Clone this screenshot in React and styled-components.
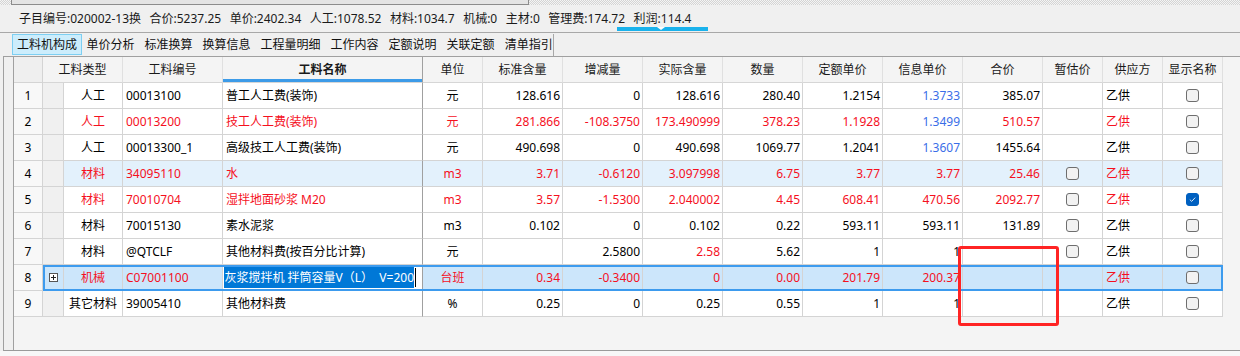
import React from "react";
import styled, { createGlobalStyle, css } from "styled-components";

const RED = "#f5101e";
const BLUE = "#3a6ee8";
const BODY_COLS = "21px 59px 100px 200px 60px repeat(7, 80px) repeat(3, 60px)";

const GlobalStyle = createGlobalStyle`
  html, body { margin: 0; padding: 0; background: #f0f0f0; }
  body {
    font-family: "Noto Sans", "Noto Sans CJK SC", sans-serif;
    font-size: 12px;
    color: #000;
  }
`;

const Page = styled.div`
  position: relative;
  width: 1240px;
  height: 356px;
  overflow: hidden;
  background: #f0f0f0;
  display: flex;
  flex-direction: column;
`;

/* strip of the window above */
const TopStrip = styled.div`
  height: 5px;
  display: flex;
  background: repeating-conic-gradient(#d4d4d4 0 25%, #f4f4f4 0 50%) 0 0 / 2px 2px;
`;
const StripTab = styled.div`
  margin-left: 11px;
  width: 516px;
  background: #e4e4e4;
  border: 1px solid #8c8c8c;
  border-top: none;
`;

const InfoBar = styled.div`
  height: 27px;
  display: flex;
  align-items: center;
  gap: 8.5px;
  padding-left: 19px;
  background: #f0f0f0;
  border-bottom: 1px solid #a8a8a8;
  line-height: 15px;
  color: #1a1a1a;
`;

const InfoItem = styled.span`
  position: relative;
  align-self: stretch;
  display: flex;
  align-items: center;
  white-space: nowrap;
  ${(p) =>
    p.$active &&
    css`
      &::after {
        content: "";
        position: absolute;
        left: -17px;
        width: 91px;
        bottom: 1px;
        height: 4px;
        background: #1ab2ec;
      }
      &::before {
        content: "";
        position: absolute;
        left: 23px;
        bottom: 2px;
        border-left: 4px solid transparent;
        border-right: 4px solid transparent;
        border-top: 3px solid #ffffff;
        z-index: 1;
      }
    `}
`;

const TabBar = styled.div`
  height: 22px;
  padding: 1px 0 0 12px;
  display: flex;
`;

const TabGroup = styled.div`
  display: flex;
  border-right: 1px solid #a8a8a8;
`;

const Tab = styled.div`
  height: 21px;
  box-sizing: border-box;
  padding: 0 5px;
  line-height: 21px;
  color: #111;
  white-space: nowrap;
  &:last-child {
    padding-right: 0;
  }
  ${(p) =>
    p.$active &&
    css`
      padding: 0 3.5px 0 4px;
      line-height: 19px;
      background: #ccedfc;
      border: 1px solid #7dcff2;
    `}
`;

const GridPanel = styled.div`
  height: 293px;
  margin-left: 3px;
  border-left: 1px solid #a0a0a0;
  border-top: 1px solid #a0a0a0;
  border-bottom: 1px solid #9a9a9a;
  padding-left: 9px;
  background: #f0f0f0;
`;

const GridFrame = styled.div`
  height: 100%;
  border-left: 1px solid #a0a0a0;
  background: #f4f4f4;
`;

const Row = styled.div`
  display: flex;
  height: 26px;
`;

const NumCell = styled.div`
  width: 29px;
  box-sizing: border-box;
  border-right: 1px solid #d4d4d4;
  border-bottom: 1px solid #d4d4d4;
  background: ${(p) => (p.$head ? "#efefef" : "#f8f8f8")};
  display: flex;
  align-items: center;
  justify-content: center;
  line-height: 15px;
`;

const HeadBody = styled.div`
  display: grid;
  grid-template-columns: ${BODY_COLS};
`;

const HeadCell = styled.div`
  grid-column: span ${(p) => p.$span || 1};
  box-sizing: border-box;
  background: #f4f4f4;
  border-right: 1px solid ${(p) => (p.$frozen ? "#a0a0a0" : "#e0e0e0")};
  border-bottom: 1px solid #d6d6d6;
  display: flex;
  align-items: center;
  justify-content: center;
  line-height: 15px;
  color: #1a1a1a;
  white-space: nowrap;
  ${(p) =>
    p.$sorted &&
    css`
      font-weight: bold;
      box-shadow: inset 0 -3px 0 #3c9be8;
    `}
`;

const RowBody = styled.div`
  display: grid;
  grid-template-columns: ${BODY_COLS};
  background: ${(p) => (p.$selected ? "#cce6fb" : p.$hl ? "#e3f1fc" : "#ffffff")};
  ${(p) =>
    p.$selected &&
    css`
      outline: 2px solid #3d9bee;
      outline-offset: -2px;
    `}
`;

const Cell = styled.div`
  box-sizing: border-box;
  border-right: 1px solid ${(p) => (p.$frozen ? "#a0a0a0" : "#d4d4d4")};
  border-bottom: 1px solid #d4d4d4;
  padding: 0 ${(p) => (p.$align === "right" ? "2px" : "3px")};
  display: flex;
  align-items: center;
  justify-content: ${(p) =>
    p.$align === "right" ? "flex-end" : p.$align === "center" ? "center" : "flex-start"};
  color: ${(p) => p.$color};
  line-height: 15px;
  white-space: nowrap;
  overflow: hidden;
  ${(p) => p.$gray && "background: #f0f0f0;"}
`;

const EditCell = styled.div`
  box-sizing: border-box;
  border-right: 1px solid #a0a0a0;
  border-bottom: 1px solid #d4d4d4;
  background: #ffffff;
  padding: 2px 6px 2px 2px;
  display: flex;
  justify-content: flex-end;
  overflow: hidden;
  line-height: 15px;
`;

const Selection = styled.span`
  flex-shrink: 0;
  display: flex;
  align-items: center;
  background: #0078d7;
  color: #ffffff;
  white-space: pre;
`;

const Caret = styled.span`
  flex-shrink: 0;
  width: 1px;
  background: #000;
  margin: 1px 0 1px 1px;
`;

const Box = styled.span`
  width: 13px;
  height: 13px;
  box-sizing: border-box;
  border-radius: 3px;
  border: 1px solid ${(p) => (p.$checked ? "#0060c0" : "#6e6e6e")};
  background: ${(p) => (p.$checked ? "#0060c0" : "#f2f2f2")};
  display: flex;
  align-items: center;
  justify-content: center;
`;

const Expander = styled.svg`
  display: block;
`;

const Annotation = styled.div`
  position: absolute;
  left: 958px;
  top: 246px;
  width: 101px;
  height: 80px;
  box-sizing: border-box;
  border: 3px solid #ff2424;
  border-radius: 3px;
  pointer-events: none;
`;

const BottomStrip = styled.div`
  flex: 1;
  background: #f7f7f7;
`;

function Check({ checked }) {
  return (
    <Box $checked={checked}>
      {checked && (
        <svg width="9" height="9" viewBox="0 0 9 9">
          <path d="M1.8 4.6 L3.7 6.4 L7.2 2.6" fill="none" stroke="#dbe9f8" strokeWidth="1" />
        </svg>
      )}
    </Box>
  );
}

const headers = [
  { label: "工料类型", span: 2 },
  { label: "工料编号" },
  { label: "工料名称", sorted: true, frozen: true },
  { label: "单位" },
  { label: "标准含量" },
  { label: "增减量" },
  { label: "实际含量" },
  { label: "数量" },
  { label: "定额单价" },
  { label: "信息单价" },
  { label: "合价" },
  { label: "暂估价" },
  { label: "供应方" },
  { label: "显示名称" },
];

const numKeys = ["std", "delta", "actual", "qty", "quota", "info", "total"];

const rows = [
  { type: "人工", code: "00013100", name: "普工人工费(装饰)", unit: "元", std: "128.616", delta: "0", actual: "128.616", qty: "280.40", quota: "1.2154", info: "1.3733", total: "385.07", blueInfo: true },
  { type: "人工", code: "00013200", name: "技工人工费(装饰)", unit: "元", std: "281.866", delta: "-108.3750", actual: "173.490999", qty: "378.23", quota: "1.1928", info: "1.3499", total: "510.57", red: true, blueInfo: true },
  { type: "人工", code: "00013300_1", name: "高级技工人工费(装饰)", unit: "元", std: "490.698", delta: "0", actual: "490.698", qty: "1069.77", quota: "1.2041", info: "1.3607", total: "1455.64", blueInfo: true },
  { type: "材料", code: "34095110", name: "水", unit: "m3", std: "3.71", delta: "-0.6120", actual: "3.097998", qty: "6.75", quota: "3.77", info: "3.77", total: "25.46", temp: true, red: true, hl: true },
  { type: "材料", code: "70010704", name: "湿拌地面砂浆 M20", unit: "m3", std: "3.57", delta: "-1.5300", actual: "2.040002", qty: "4.45", quota: "608.41", info: "470.56", total: "2092.77", temp: true, red: true, show: true },
  { type: "材料", code: "70015130", name: "素水泥浆", unit: "m3", std: "0.102", delta: "0", actual: "0.102", qty: "0.22", quota: "593.11", info: "593.11", total: "131.89", temp: true },
  { type: "材料", code: "@QTCLF", name: "其他材料费(按百分比计算)", unit: "元", std: "", delta: "2.5800", actual: "2.58", qty: "5.62", quota: "1", info: "1", total: "", temp: true, redKeys: ["actual"] },
  { type: "机械", code: "C07001100", name: "灰浆搅拌机 拌筒容量V（L）  V=200", unit: "台班", std: "0.34", delta: "-0.3400", actual: "0", qty: "0.00", quota: "201.79", info: "200.37", total: "", red: true, selected: true, expand: true, editing: true },
  { type: "其它材料", code: "39005410", name: "其他材料费", unit: "%", std: "0.25", delta: "0", actual: "0.25", qty: "0.55", quota: "1", info: "1", total: "" },
];

function DataRow({ row, index }) {
  const base = row.red ? RED : "#000";
  const colorOf = (key) => {
    if (key === "info" && row.blueInfo) return BLUE;
    if (row.redKeys && row.redKeys.includes(key)) return RED;
    return base;
  };
  return (
    <Row>
      <NumCell>{index + 1}</NumCell>
      <RowBody $hl={row.hl} $selected={row.selected}>
        <Cell $gray={!row.selected} $align="center">
          {row.expand && (
            <Expander width="9" height="9" viewBox="0 0 9 9">
              <rect x="0.5" y="0.5" width="8" height="8" fill="#fff" stroke="#555" />
              <path d="M2 4.5 H7 M4.5 2 V7" stroke="#222" />
            </Expander>
          )}
        </Cell>
        <Cell $align="center" $color={base}>{row.type}</Cell>
        <Cell $color={base}>{row.code}</Cell>
        {row.editing ? (
          <EditCell>
            <Selection>{row.name}</Selection>
            <Caret />
          </EditCell>
        ) : (
          <Cell $frozen $color={base}>{row.name}</Cell>
        )}
        <Cell $align="center" $color={base}>{row.unit}</Cell>
        {numKeys.map((k) => (
          <Cell key={k} $align="right" $color={colorOf(k)}>
            {row[k]}
          </Cell>
        ))}
        <Cell $align="center">{row.temp && <Check />}</Cell>
        <Cell $color={base}>乙供</Cell>
        <Cell $align="center">
          <Check checked={row.show} />
        </Cell>
      </RowBody>
    </Row>
  );
}

export default function App() {
  return (
    <>
      <GlobalStyle />
      <Page>
        <TopStrip>
          <StripTab />
        </TopStrip>
        <InfoBar>
          <InfoItem>子目编号:020002-13换</InfoItem>
          <InfoItem>合价:5237.25</InfoItem>
          <InfoItem>单价:2402.34</InfoItem>
          <InfoItem>人工:1078.52</InfoItem>
          <InfoItem>材料:1034.7</InfoItem>
          <InfoItem>机械:0</InfoItem>
          <InfoItem>主材:0</InfoItem>
          <InfoItem>管理费:174.72</InfoItem>
          <InfoItem $active>利润:114.4</InfoItem>
        </InfoBar>
        <TabBar>
          <TabGroup>
            <Tab $active>工料机构成</Tab>
            <Tab>单价分析</Tab>
            <Tab>标准换算</Tab>
            <Tab>换算信息</Tab>
            <Tab>工程量明细</Tab>
            <Tab>工作内容</Tab>
            <Tab>定额说明</Tab>
            <Tab>关联定额</Tab>
            <Tab>清单指引</Tab>
          </TabGroup>
        </TabBar>
        <GridPanel>
          <GridFrame>
            <Row>
              <NumCell $head />
              <HeadBody>
                {headers.map((h) => (
                  <HeadCell key={h.label} $span={h.span} $sorted={h.sorted} $frozen={h.frozen}>
                    {h.label}
                  </HeadCell>
                ))}
              </HeadBody>
            </Row>
            {rows.map((row, i) => (
              <DataRow key={row.code} row={row} index={i} />
            ))}
          </GridFrame>
        </GridPanel>
        <BottomStrip />
        <Annotation />
      </Page>
    </>
  );
}
